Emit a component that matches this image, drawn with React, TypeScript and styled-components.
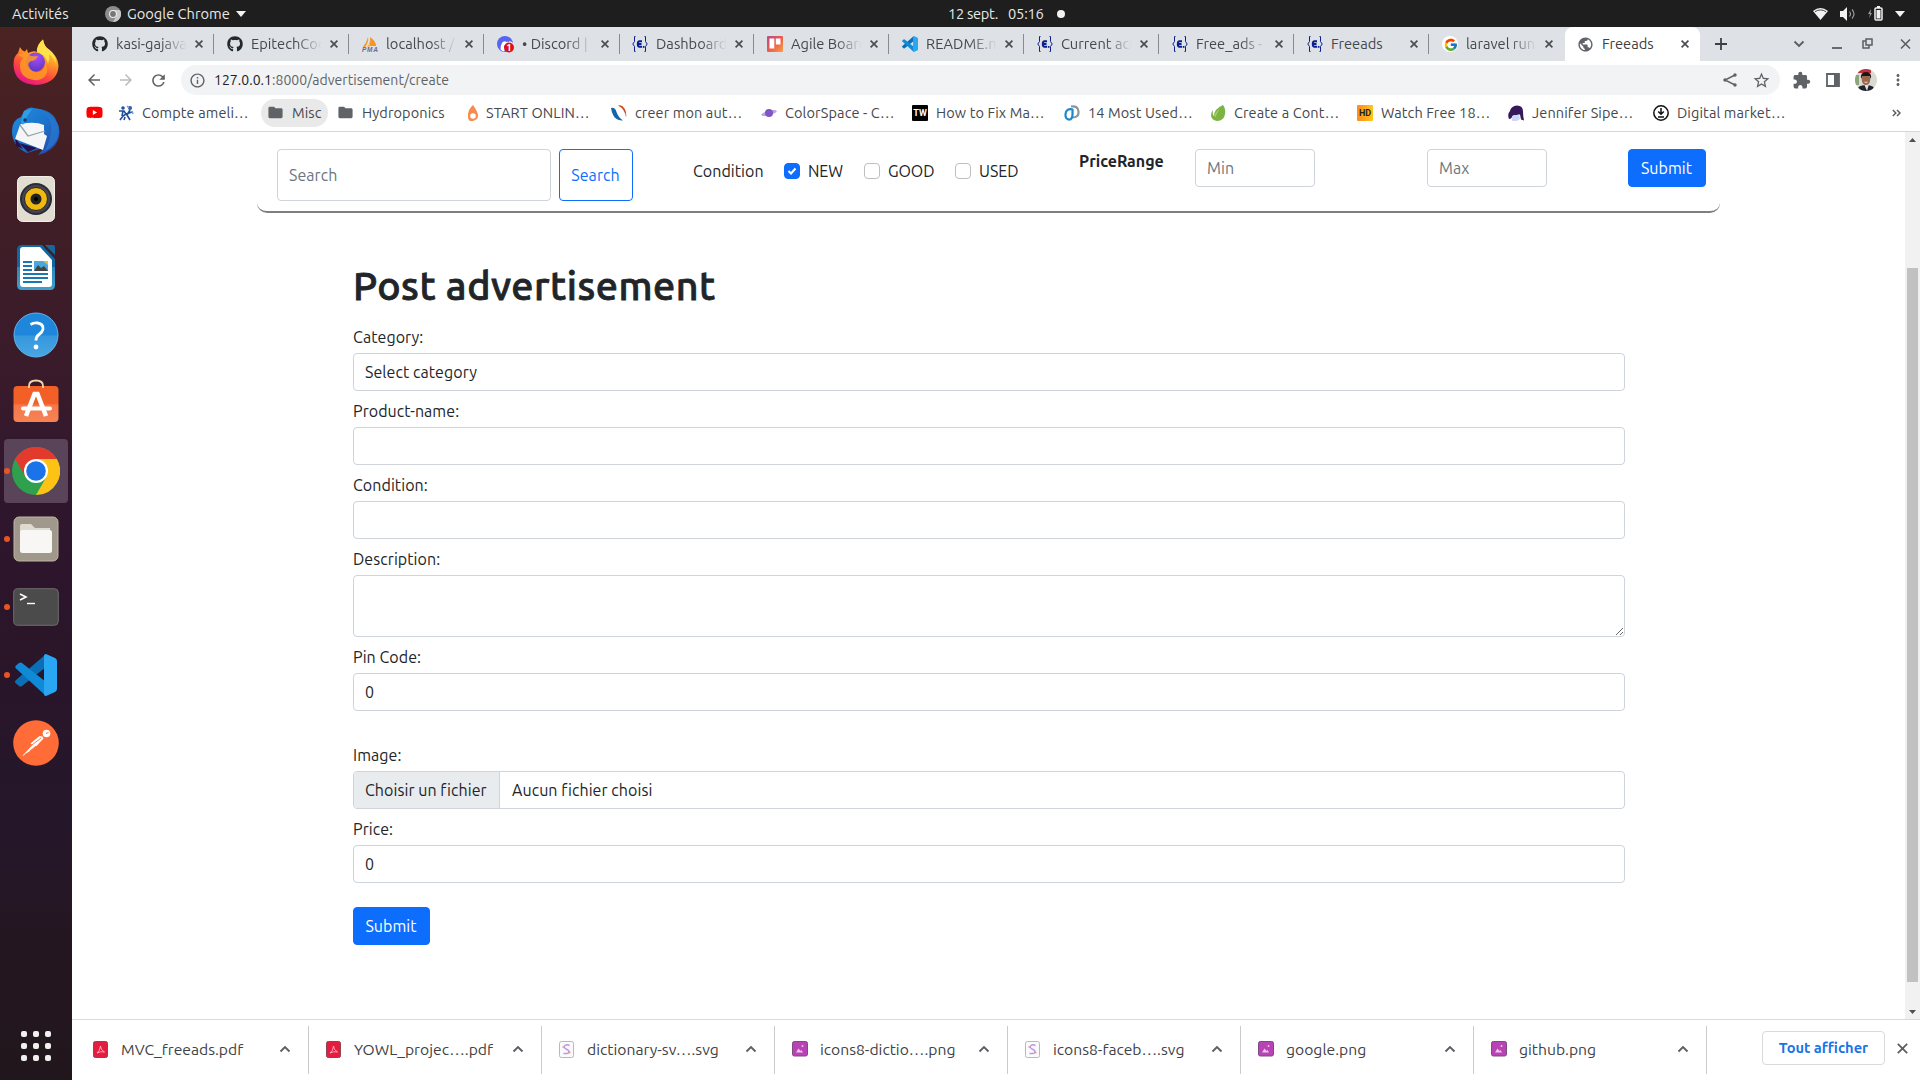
import React from "react";
import styled, { createGlobalStyle, css } from "styled-components";
import { FaGithub, FaDiscord, FaYoutube } from "react-icons/fa";
import { FcGoogle } from "react-icons/fc";
import {
  MdArrowBack,
  MdArrowForward,
  MdRefresh,
  MdInfoOutline,
  MdStarBorder,
  MdExtension,
  MdMoreVert,
  MdPublic,
  MdFolder,
} from "react-icons/md";

const UI = `"Ubuntu", "Noto Sans", "Open Sans", sans-serif`;

const GlobalStyle = createGlobalStyle`
  * { box-sizing: border-box; }
  body { margin: 0; background: #fff; font-family: ${UI}; overflow: hidden; }
  svg { display: block; flex: none; }
`;

const Desktop = styled.div`
  width: 1920px;
  height: 1080px;
  display: grid;
  grid-template: 27px 1053px / 72px 1848px;
  font-family: ${UI};
`;

/* ---------- GNOME top bar ---------- */
const TopBar = styled.header`
  grid-column: 1 / 3;
  background: #1e1e1e;
  color: #e8e8e8;
  display: grid;
  grid-template-columns: 936px 1fr auto;
  align-items: center;
  font-size: 14.67px;
  line-height: 26px;
`;
const TopGroup = styled.div<{ $gap?: number; $left?: number; $right?: number }>`
  display: flex;
  align-items: center;
  gap: ${(p) => p.$gap ?? 0}px;
  padding: 0 ${(p) => p.$right ?? 0}px 0 ${(p) => p.$left ?? 0}px;
`;

const Txt = styled.span<{ $w?: number; $ls?: number }>`
  display: block;
  flex: none;
  white-space: pre;
  ${(p) => p.$w && css`width: ${p.$w}px;`}
  letter-spacing: ${(p) => p.$ls ?? 0}px;
`;

/* ---------- Dock ---------- */
const Dock = styled.nav`
  background: linear-gradient(#4b2321 0, #431f25 12%, #3a1b2b 32%, #2f162d 45%, #2a1529 60%, #25172a 75%, #241620 88%, #22161d 100%);
  display: flex;
  flex-direction: column;
  align-items: center;
  padding-top: 2px;
`;
const DockItem = styled.div<{ $active?: boolean; $lift?: number }>`
  width: 72px;
  height: 68px;
  display: grid;
  grid-template-columns: 4px 64px 4px;
  align-items: center;
  & > div {
    grid-column: 2;
    height: 64px;
    padding-bottom: ${(p) => p.$lift ?? 0}px;
    border-radius: 4px;
    display: grid;
    place-items: center;
    background: ${(p) => (p.$active ? "#5a4459" : "transparent")};
  }
`;
const Running = styled.i`
  position: absolute;
  left: 4px;
  width: 6px;
  height: 6px;
  border-radius: 50%;
  background: #e95420;
`;
const AppGrid = styled.div`
  margin-top: auto;
  margin-bottom: 19px;
  display: grid;
  grid-template-columns: repeat(3, 6px);
  gap: 6px;
  i {
    width: 6px;
    height: 6px;
    border-radius: 2px;
    background: #f2f0ee;
  }
`;

/* ---------- Browser ---------- */
const Browser = styled.main`
  display: grid;
  grid-template-rows: 34px 38px 33px 887px 61px;
  background: #fff;
`;
const TabStrip = styled.div`
  background: #dee1e6;
  display: flex;
  padding-left: 8px;
`;
const Tab = styled.div<{ $active?: boolean; $sep?: boolean }>`
  width: 135px;
  height: 34px;
  display: flex;
  align-items: center;
  padding: 0 7px 0 12px;
  font-size: 14.67px;
  color: ${(p) => (p.$active ? "#3c4043" : "#45484d")};
  background: ${(p) => (p.$active ? "#fff" : "transparent")};
  border-radius: 8px 8px 0 0;
  svg + span { margin-left: 8px; }
  &::after {
    content: "";
    width: 1px;
    height: 20px;
    margin-left: 10px;
    background: ${(p) => (p.$sep ? "#878b91" : "transparent")};
    flex: none;
  }
`;
const TabTitle = styled.span<{ $fade?: boolean }>`
  width: 72px;
  margin-right: 7px;
  flex: none;
  overflow: hidden;
  white-space: pre;
  line-height: 24px;
  ${(p) => p.$fade && css`mask-image: linear-gradient(90deg, #000 62%, transparent 98%);`}
`;
const WindowButtons = styled.div`
  margin-left: auto;
  display: flex;
  align-items: center;
  gap: 18px;
  padding-right: 5px;
`;
const Minimise = styled.svg`
  margin: 0 -7px 0 1px;
`;
const NewTab = styled.div`
  display: flex;
  align-items: center;
  padding-left: 12px;
`;

const Toolbar = styled.div`
  display: flex;
  align-items: center;
  padding: 0 13px;
  color: #5f6368;
`;
const NavButtons = styled.div`
  width: 96px;
  display: flex;
  gap: 14px;
  .off { color: #b9bcc0; }
`;
const Omnibox = styled.div`
  width: 1599px;
  height: 30px;
  border-radius: 15px;
  background: #f1f3f4;
  display: flex;
  align-items: center;
  padding: 0 9px 0 8px;
  font-size: 14px;
  b { font-weight: 400; color: #202124; }
  svg + span { margin-left: 8px; }
`;
const OmniActions = styled.div`
  margin-left: auto;
  display: flex;
  gap: 13px;
`;
const ToolActions = styled.div`
  margin-left: 12px;
  display: flex;
  gap: 12px;
  align-items: center;
`;

const Bookmarks = styled.div`
  display: flex;
  align-items: center;
  height: 33px;
  padding: 0 19px 5px 14px;
  border-bottom: 1px solid #d5d7da;
  font-size: 14.5px;
  color: #45484c;
`;
const Bookmark = styled.div<{ $gap?: number; $pill?: boolean }>`
  display: flex;
  align-items: center;
  gap: 8px;
  flex: none;
  margin-right: ${(p) => p.$gap ?? 17}px;
  ${(p) =>
    p.$pill &&
    css`
      height: 28px;
      padding: 0 6px;
      border-radius: 14px;
      background: #e9e9ea;
    `}
`;
const Overflow = styled.svg`
  margin-left: auto;
`;
const Badge = styled.span<{ $bg: string; $fg: string }>`
  width: 16px;
  height: 16px;
  border-radius: 1px;
  display: grid;
  place-items: center;
  background: ${(p) => p.$bg};
  color: ${(p) => p.$fg};
  font: 700 9px/16px "Roboto", sans-serif;
`;

/* ---------- Web page ---------- */
const Viewport = styled.div`
  display: grid;
  grid-template-columns: 1833px 15px;
`;
const Page = styled.div`
  font-size: 16px;
  letter-spacing: 0.06px;
  color: #212529;
  display: flex;
  flex-direction: column;
`;
const FilterBar = styled.section`
  width: 1463px;
  height: 81px;
  margin-left: 185px;
  padding: 17px 14px 0 20px;
  border-bottom: 2px solid #7f7f7f;
  border-radius: 10px;
  display: flex;
  align-items: flex-start;
`;
const fieldText = css`
  font-family: ${UI};
  font-size: 16px;
  letter-spacing: 0.06px;
  color: #212529;
`;
const Input = styled.input<{ $w?: string; $h?: number; $mr?: number }>`
  ${fieldText}
  display: block;
  width: ${(p) => p.$w ?? "100%"};
  height: ${(p) => p.$h ?? 38}px;
  margin: 0 ${(p) => p.$mr ?? 0}px 0 0;
  padding: 0 11px 1px;
  border: 1px solid #ced4da;
  border-radius: 4px;
  background: #fff;
  outline: 0;
  &::placeholder { color: #6c757d; opacity: 1; }
`;
const Button = styled.button<{ $w: number; $h?: number; $outline?: boolean }>`
  ${fieldText}
  width: ${(p) => p.$w}px;
  height: ${(p) => p.$h ?? 38}px;
  padding: 0 1px 1px 0;
  border-radius: 4px;
  border: 1px solid #0d6efd;
  background: ${(p) => (p.$outline ? "#fff" : "#0d6efd")};
  color: ${(p) => (p.$outline ? "#0d6efd" : "#fff")};
`;
const Conditions = styled.div`
  display: flex;
  align-items: center;
  height: 44px;
  margin-left: 60px;
`;
const Check = styled.span<{ $on?: boolean }>`
  width: 16px;
  height: 16px;
  border-radius: 4px;
  margin-right: 8px;
  border: 1px solid ${(p) => (p.$on ? "#0d6efd" : "#bfbfbf")};
  background: ${(p) => (p.$on ? "#0d6efd" : "#fff")};
  display: grid;
  place-items: center;
`;
const PriceLabel = styled.b`
  width: 116px;
  margin-left: 59px;
  line-height: 24px;
  letter-spacing: 0;
`;

const Form = styled.form`
  width: 1272px;
  margin: 41px 0 0 281px;
`;
const Title = styled.h1`
  margin: 0 0 9px;
  font-size: 39.5px;
  font-weight: 500;
  line-height: 62px;
  letter-spacing: 0.5px;
  -webkit-text-stroke: 0.8px #212529;
`;
const Field = styled.div<{ $mb?: number }>`
  margin-bottom: ${(p) => p.$mb ?? 8}px;
`;
const Label = styled.label`
  display: block;
  height: 28px;
  line-height: 24px;
`;
const Area = styled.textarea`
  display: block;
  width: 100%;
  height: 62px;
  border: 1px solid #ced4da;
  border-radius: 4px;
  outline: 0;
`;
const FileBox = styled.div`
  ${fieldText}
  height: 38px;
  border: 1px solid #ced4da;
  border-radius: 4px;
  display: flex;
  line-height: 36px;
  overflow: hidden;
  span:first-child {
    width: 146px;
    padding-left: 11px;
    margin-right: 12px;
    background: #e9ecef;
    border-right: 1px solid #ced4da;
  }
`;
const Scrollbar = styled.div`
  background: #f1f1f1;
  display: flex;
  flex-direction: column;
  align-items: center;
  padding: 6px 0 5px;
`;
const Thumb = styled.div`
  width: 11px;
  height: 714px;
  margin: 126px 0 auto;
  background: #c1c1c1;
`;

/* ---------- Download shelf ---------- */
const Shelf = styled.footer`
  border-top: 1px solid #d9dadd;
  padding: 6px 12px 0 4px;
  display: flex;
  height: 61px;
`;
const Download = styled.div`
  width: 233px;
  height: 48px;
  border-right: 1px solid #c9cbce;
  padding: 0 17px 2px 17px;
  display: flex;
  align-items: center;
  justify-content: space-between;
  font-size: 15.7px;
  color: #3f4347;
`;
const FileIcon = styled.div`
  width: 16px;
`;
const FileName = styled.span`
  flex: 1;
  margin-left: 12px;
  white-space: pre;
`;
const ShowAll = styled.div`
  width: 123px;
  height: 34px;
  margin: 5px 12px 0 auto;
  border: 1px solid #d8dade;
  border-radius: 4px;
  color: #1a73e8;
  font: 600 14.67px/31px ${UI};
  text-align: center;
`;
const CloseShelf = styled.div`
  padding-top: 17px;
`;

/* ---------- Small icons ---------- */
const Cross = ({ s = 8, c = "#4a4d51", w = 1.7 }: { s?: number; c?: string; w?: number }) => (
  <svg width={s} height={s} viewBox="0 0 8 8" stroke={c} strokeWidth={(w * 8) / s}>
    <path d="M.6.6l6.8 6.8M7.4.6L.6 7.4" />
  </svg>
);
const Chevron = ({ up }: { up?: boolean }) => (
  <svg width="12" height="8" viewBox="0 0 12 8" fill="none" stroke="#5b5f64" strokeWidth="1.9">
    <path d={up ? "M1.5 6.5L6 2l4.5 4.5" : "M1.5 1.5L6 6l4.5-4.5"} />
  </svg>
);
const Caret = ({ w = 10, h = 6, up, c = "#f2f2f2" }: { w?: number; h?: number; up?: boolean; c?: string }) => (
  <svg width={w} height={h} viewBox="0 0 10 6" preserveAspectRatio="none">
    <path fill={c} d={up ? "M0 6h10L5 0z" : "M0 0h10L5 6z"} />
  </svg>
);
const ChromeGrey = () => (
  <svg width="16" height="16" viewBox="0 0 16 16">
    <circle cx="8" cy="8" r="8" fill="#8d8d8d" />
    <path d="M8 4h7A8 8 0 0 1 8 16l3.5-6z" fill="#c9c9c9" />
    <circle cx="8" cy="8" r="4" fill="#eee" />
    <circle cx="8" cy="8" r="2.9" fill="#777" />
  </svg>
);
const Epi = () => (
  <svg width="16" height="16" viewBox="0 0 16 16" fill="none" stroke="#0b1f8f">
    <path d="M3.5.5h-1v5L.8 8l1.700 2.500v5h1M12.500.5h1v5L15.200 8l-1.700 2.500v5h-1" />
    <path strokeWidth="2" d="M10 5.200H7.500Q5.800 5.200 5.800 8t1.700 2.800H10M5.500 8h4" />
    <path strokeWidth="1.800" d="M10.800 10.900h1.700" />
  </svg>
);
const Pma = () => (
  <svg width="16" height="16" viewBox="0 0 16 16">
    <path d="M6 1Q7 6 3 11H1Q5 6 6 1M8 1q6 4 6 9H7Q9 5 8 1" fill="#f79621" />
    <path d="M5 11q3-4 3-8v8z" fill="#fbb860" />
    <text x="0" y="16" fontSize="6.5" fontWeight="700" fontStyle="italic" fontFamily="Liberation Sans" fill="#666c99" textLength="16">PMA</text>
  </svg>
);
const DiscordBadge = () => (
  <svg width="17" height="17" viewBox="0 0 17 17">
    <circle cx="8" cy="8" r="8" fill="#5865f2" />
    <FaDiscord x={3} y={3} width={10} height={10} color="#fff" />
    <circle cx="12" cy="11.5" r="5" fill="#d8121c" />
    <text x="9.600" y="14.800" fontSize="9" fontWeight="700" fontFamily="Roboto" fill="#fff">1</text>
  </svg>
);
const Trello = () => (
  <svg width="16" height="16" viewBox="0 0 16 16">
    <defs>
      <linearGradient id="tr" x1="0" y1="0" x2="1" y2="1">
        <stop offset="0" stopColor="#b0508f" /><stop offset=".5" stopColor="#ee5a48" /><stop offset="1" stopColor="#f7a04a" />
      </linearGradient>
    </defs>
    <rect width="16" height="16" rx="1" fill="url(#tr)" />
    <path d="M2.500 2.500h4.800v10H2.500zM8.800 2.500h4.700v6H8.800z" fill="#fff" />
  </svg>
);
const VsLogo = ({ s = 16 }: { s?: number }) => (
  <svg width={s} height={s} viewBox="0 0 42 42">
    <path d="M31 0L1 26q-2 2 0 3.500l3 2.500q1.500 1 3 0L31 13z" fill="#0a6fb5" />
    <path d="M31 42L1 14.500q-1.500-1.500 0-3L4 9q1.500-1 3 0l24 19z" fill="#1089d6" />
    <path d="M31 0l9 4q2 1 2 3v28q0 2-2 3l-9 4q-2 0-2-2V2q0-2 2-2z" fill="#2aa7f2" />
  </svg>
);
const GoogleDisc = () => (
  <svg width="16" height="16" viewBox="0 0 16 16">
    <circle cx="8" cy="8" r="8" fill="#fff" />
    <FcGoogle x={1.5} y={1.5} width={13} height={13} />
  </svg>
);
const Share = () => (
  <svg width="18" height="18" viewBox="0 0 18 18" fill="#5f6368">
    <path d="M14 4L4 9l10 5" fill="none" stroke="#5f6368" strokeWidth="1.400" />
    <circle cx="14" cy="4" r="1.700" /><circle cx="4" cy="9" r="1.700" /><circle cx="14" cy="14" r="1.700" />
  </svg>
);
const Avatar = () => (
  <svg width="22" height="22" viewBox="0 0 22 22">
    <defs><clipPath id="av"><circle cx="11" cy="11" r="11" /></clipPath></defs>
    <g clipPath="url(#av)">
      <rect width="22" height="22" fill="#d9dad2" />
      <path d="M3 0h13v4H3z" fill="#b93340" /><path d="M0 6h4v10H0z" fill="#8aa57c" />
      <path d="M2 22q0-6 9-6t9 6z" fill="#20242e" />
      <path d="M9 15h5l-2 7z" fill="#dfe3ea" />
      <ellipse cx="11" cy="10.500" rx="4.200" ry="5.500" fill="#9c674a" />
      <path d="M6 10q-1-7 5-7t5 7l-1.500-3h-7z" fill="#1d1615" />
      <path d="M9.500 13q1.500 1 3 0" stroke="#e9d8d0" fill="none" />
    </g>
  </svg>
);
const Ameli = () => (
  <svg width="16" height="16" viewBox="0 0 16 16" fill="none" stroke="#1f4f9c" strokeWidth="1.600">
    <circle cx="5" cy="3" r="1" /><circle cx="12" cy="3" r="1.200" />
    <path d="M1 6h5l2 3-3 2-3 4M5 6l-1 5M8 9l6-2M12 5l-3 5 3 5M7 12l-1 3" /><path d="M14 6l1 3M9 1l2 2" stroke="#6aa8dd" />
  </svg>
);
const Drop = () => (
  <svg width="10" height="16" viewBox="0 0 10 16">
    <path d="M5 0q5 7 5 10.800T5 16 0 10.800 5 0z" fill="#f58b4c" /><circle cx="5" cy="11" r="2.800" fill="#fff" />
  </svg>
);
const Swoosh = () => (
  <svg width="16" height="16" viewBox="0 0 16 16">
    <path d="M0 3q4-1 5.500 4t6.500 8.500Q2 16 0 3z" fill="#1565a9" /><path d="M7 .5q4-1 6.500 3t1.500 9Q14 4 7 .5z" fill="#d2451e" />
  </svg>
);
const Planet = () => (
  <svg width="16" height="16" viewBox="0 0 16 16">
    <ellipse cx="8" cy="8" rx="8" ry="2.300" fill="#b8a4e8" transform="rotate(-15 8 8)" /><circle cx="8" cy="8" r="4" fill="#7e57c2" />
  </svg>
);
const Swirl = () => (
  <svg width="16" height="16" viewBox="0 0 16 16" fill="none" strokeWidth="2.200">
    <path d="M7 1.500q7-1 7.500 5T8.500 12.500" stroke="#8a949c" />
    <path d="M9 4.500Q2 3 1.500 9t5 5.500M8.500 4v6q0 3-2 4.500" stroke="#1b86cc" />
  </svg>
);
const Leaf = () => (
  <svg width="15" height="16" viewBox="0 0 15 16">
    <path d="M12 0q3 4 2 9-1 7-8 7-6-1-6-6 0-3 2-5-1 4 1 6 0-7 9-11z" fill="#7cb342" /><path d="M3 11Q5 6 9 4 5 9 5 12z" fill="#a5d06e" />
  </svg>
);
const Jennifer = () => (
  <svg width="16" height="16" viewBox="0 0 16 16">
    <path d="M1 14Q-1 9 2 6 3 1 9 .5q6 0 6 6 0 4 1 9l-3-1-1-5-7 1-2 3z" fill="#35195a" /><path d="M4 11l7-1.500 1 4.500-3 2H4z" fill="#cdd8f6" />
  </svg>
);
const Digital = () => (
  <svg width="16" height="16" viewBox="0 0 16 16" fill="none" stroke="#111" strokeWidth="1.500">
    <circle cx="8" cy="8" r="7.200" /><path d="M8 3v6M5.200 6.500L8 9.300l2.800-2.800M5 12h6" />
  </svg>
);

/* ---------- Dock icons ---------- */
const Firefox = () => (
  <svg width="48" height="48" viewBox="0 0 48 48">
    <defs>
      <linearGradient id="ff" x1=".8" y1="0" x2=".3" y2="1">
        <stop offset="0" stopColor="#fff44f" /><stop offset=".35" stopColor="#ffa726" /><stop offset=".68" stopColor="#ff4b3a" /><stop offset="1" stopColor="#e5118a" />
      </linearGradient>
      <radialGradient id="fp" cx=".55" cy=".25" r=".8"><stop offset="0" stopColor="#a64bff" /><stop offset="1" stopColor="#5a38b8" /></radialGradient>
    </defs>
    <path fill="url(#ff)" d="M8 9q2 4 5 4.500l2-2.500 1 4q6-3 9-1-1-7 6-12.500 1 7 6 10 9 7 9.500 16Q46 45 25 47 2 46 1.500 27q0-9 4.500-12z" />
    <circle cx="23.500" cy="24" r="9.500" fill="url(#fp)" />
    <path fill="#ff9a23" d="M6 17q7-4 11 0 3 2 9 1-2 5-7 5-4 2-2 6 3 6 9 5 7-1 7-9 4 6 1 12-4 6-12 5Q8 40 8 28 8 21 12 20z" opacity=".85" />
    <path fill="#ffe14a" d="M25 14Q25 7 31 1.500q1 7 6 10 7 5 7 14-3-7-7-9 1 4-1 9-2-9-11-11.500z" />
  </svg>
);
const Thunderbird = () => (
  <svg width="48" height="48" viewBox="0 0 48 48">
    <defs><linearGradient id="tb" x1="0" y1="0" x2="1" y2="1"><stop offset="0" stopColor="#1f8fe0" /><stop offset=".55" stopColor="#1c6fc9" /><stop offset="1" stopColor="#2c3a9c" /></linearGradient></defs>
    <path fill="url(#tb)" d="M12 4Q17-1 22 1q18 2 22 12 6 10 2 20-4 11-20 15l6-7-8 2-9 3Q0 39 0 24 0 13 9 10z" />
    <path fill="#24104a" d="M3 30l8 12-7-3zM7 36l18 5-9 4z" />
    <path fill="#f4f5f7" d="M9 17q14-3 23 1v9l3 2-4 14L3 32l5-14z" />
    <path d="M8 18l8 11 17-5" fill="none" stroke="#9aa0a8" strokeWidth="1.300" />
    <path fill="#2f9fe8" d="M12 4l8-2q-6 8-9 16l-2-3z" />
    <circle cx="13" cy="13" r="1.800" fill="#193a6b" />
    <path fill="#2877cf" d="M27 4q14 6 12 20-1 10-6 20 11-6 13-14 3-12-5-19-6-6-14-7z" opacity=".8" />
  </svg>
);
const Rhythmbox = () => (
  <svg width="38" height="46" viewBox="0 0 38 46">
    <rect x=".5" y=".5" width="37" height="45" rx="5" fill="#e2ddd1" stroke="#f2efe8" />
    <circle cx="19" cy="23" r="16" fill="#2b2b36" /><circle cx="19" cy="23" r="14" fill="#454550" />
    <circle cx="19" cy="23" r="11.500" fill="#f0b90f" stroke="#222" />
    <circle cx="19" cy="23" r="5.500" fill="#222" /><circle cx="19" cy="23" r="2" fill="#000" />
  </svg>
);
const Writer = () => (
  <svg width="38" height="46" viewBox="0 0 38 46">
    <defs><linearGradient id="wr" x1="0" y1="0" x2="0" y2="1"><stop offset=".48" stopColor="#0f689f" /><stop offset=".5" stopColor="#2d87b7" /><stop offset="1" stopColor="#3fa0cf" /></linearGradient></defs>
    <path d="M5 1h20l13 14v26q0 5-5 5H5q-5 0-5-5V6q0-5 5-5z" fill="url(#wr)" />
    <path d="M28 1h8q2 0 2 2v8z" fill="#15689b" />
    <path d="M6 3h17l12 13v24q0 3-3 3H6q-3 0-3-3V6q0-3 3-3z" fill="#fff" />
    <path d="M6 18h9M6 22h9M6 26h9M6 30h25M6 34h25M6 38h19" stroke="#1a78b0" strokeWidth="2" />
    <path d="M17 17h14v10H17z" fill="#4ba8dc" /><path d="M17 27l4-6 3 3 3-2 4 5z" fill="#444" /><path d="M26 17h5v4z" fill="#f5b92e" />
  </svg>
);
const Help = () => (
  <svg width="46" height="46" viewBox="0 0 46 46">
    <defs><linearGradient id="hp" x1="0" y1="0" x2="0" y2="1"><stop offset=".5" stopColor="#1e87dc" /><stop offset=".52" stopColor="#3697dd" /><stop offset="1" stopColor="#49a6e3" /></linearGradient></defs>
    <circle cx="23" cy="23" r="22" fill="url(#hp)" stroke="#62b3ec" />
    <path d="M17.500 12.500q3-1.800 7-1.500 6 1 5.500 6-.5 3-4 5.500-3 2-3 6" fill="none" stroke="#fff" strokeWidth="2.800" /><circle cx="23" cy="35" r="2.400" fill="#fff" />
  </svg>
);
const Software = () => (
  <svg width="46" height="46" viewBox="0 0 46 46">
    <defs><linearGradient id="sw" x1="0" y1="0" x2="0" y2="1"><stop offset=".5" stopColor="#f25f27" /><stop offset=".52" stopColor="#f4774a" /><stop offset="1" stopColor="#f68353" /></linearGradient></defs>
    <rect x=".5" y="9" width="45" height="36" rx="4" fill="url(#sw)" />
    <path d="M16 11V9q0-5.500 7-5.500T30 9v2" fill="none" stroke="#f3d6a7" strokeWidth="1.800" />
    <path d="M13 39l8.500-22h3L33 39" fill="none" stroke="#fff" strokeWidth="4.500" /><path d="M10 31.500h27" stroke="#fff" strokeWidth="4" strokeLinecap="round" />
  </svg>
);
const Chrome = () => (
  <svg width="48" height="48" viewBox="0 0 48 48">
    <circle cx="24" cy="24" r="24" fill="#2fa14e" />
    <path d="M24 12h20.800A24 24 0 0 1 24 48l10.400-18z" fill="#fcc314" />
    <path d="M24 12h20.800A24 24 0 0 0 3.200 12l10.400 18Z" fill="#e23b2e" />
    <circle cx="24" cy="24" r="12" fill="#fff" /><circle cx="24" cy="24" r="9.800" fill="#1a73e8" />
  </svg>
);
const Files = () => (
  <svg width="46" height="46" viewBox="0 0 46 46">
    <rect x="1" y="1" width="44" height="44" rx="5" fill="#a0988a" stroke="#bdb5a4" />
    <path d="M7 14V10q0-2 2-2h9l4 4h15v8H7z" fill="#dfdad0" /><rect x="7" y="14" width="32" height="23" rx="2.500" fill="#f8f7f5" />
  </svg>
);
const Terminal = () => (
  <svg width="46" height="38" viewBox="0 0 46 38">
    <rect x=".7" y=".7" width="44.600" height="36.600" rx="4" fill="#4b4b4b" stroke="#6d6d6d" />
    <path d="M7 6l6 3-6 3" fill="none" stroke="#fff" strokeWidth="1.600" /><path d="M14 15.500h8" stroke="#fff" strokeWidth="1.400" />
  </svg>
);
const Postman = () => (
  <svg width="46" height="46" viewBox="0 0 46 46">
    <circle cx="23" cy="23" r="22.800" fill="#ff6c37" />
    <circle cx="33.500" cy="13.500" r="3.800" fill="#fff" />
    <path d="M9.500 35.500l3-3 7-7.500-2-1.500 9-7.500 3 .5 1 2-7 7.500-8 6-3.500 2-1 1.500z" fill="#fff" />
    <path d="M19 25l9-7M17 31l6-5" stroke="#ff6c37" strokeWidth=".9" fill="none" /><path d="M33 13.500l2.500-1" stroke="#ff6c37" />
  </svg>
);

const PdfIcon = () => (
  <svg width="15" height="17" viewBox="0 0 15 17">
    <rect x=".5" y=".5" width="14" height="16" rx="1.800" fill="#e51c3f" stroke="#8d4550" />
    <path d="M4 12q3-2 3.500-7 0 4 4 6-4-1-7.500 1z" fill="none" stroke="#ffc6d0" strokeWidth=".8" />
  </svg>
);
const SvgIcon = () => (
  <svg width="15" height="17" viewBox="0 0 15 17">
    <rect x=".5" y=".5" width="14" height="16" rx="1.800" fill="#faf9fc" stroke="#b9b9bd" />
    <path d="M10.500 4.500Q8 3 6 4.500T7 8q3 1 3 3t-5.500 1.500" fill="none" stroke="#b49aec" strokeWidth="1.500" /><path d="M3.500 6h2M9.500 11.500h2" stroke="#ff8f70" strokeWidth="1.500" />
  </svg>
);
const PngIcon = () => (
  <svg width="16" height="16" viewBox="0 0 16 16">
    <rect x=".5" y=".5" width="15" height="14.500" rx="1.800" fill="#b743b5" stroke="#7c4b80" />
    <path d="M4 11.500l2.500-4 2 2.500 1-1 1.500 2.500z" fill="#f0c4ee" /><circle cx="10.500" cy="5" r="1" fill="#f0c4ee" />
  </svg>
);

const dock: { icon: React.ReactNode; running?: boolean; active?: boolean; lift?: number }[] = [
  { icon: <Firefox />, lift: 3 },
  { icon: <Thunderbird /> },
  { icon: <Rhythmbox /> },
  { icon: <Writer />, lift: 1 },
  { icon: <Help /> },
  { icon: <Software />, lift: 7 },
  { icon: <Chrome />, running: true, active: true },
  { icon: <Files />, running: true },
  { icon: <Terminal />, running: true },
  { icon: <VsLogo s={42} />, running: true },
  { icon: <Postman />, lift: 1 },
];

const tabs: { icon: React.ReactNode; title: string; plain?: boolean }[] = [
  { icon: <FaGithub size={16} color="#24292f" />, title: "kasi-gajavan" },
  { icon: <FaGithub size={16} color="#24292f" />, title: "EpitechCod" },
  { icon: <Pma />, title: "localhost / l" },
  { icon: <DiscordBadge />, title: "• Discord | #" },
  { icon: <Epi />, title: "Dashboard" },
  { icon: <Trello />, title: "Agile Board" },
  { icon: <VsLogo />, title: "README.m" },
  { icon: <Epi />, title: "Current act" },
  { icon: <Epi />, title: "Free_ads - " },
  { icon: <Epi />, title: "Freeads", plain: true },
  { icon: <GoogleDisc />, title: "laravel run" },
  { icon: <MdPublic size={17} color="#5f6368" />, title: "Freeads", plain: true },
];

const marks: { icon: React.ReactNode; text: string; w: number; gap?: number; pill?: boolean }[] = [
  { icon: <Ameli />, text: "Compte ameli…", w: 108, gap: 11 },
  { icon: <MdFolder size={17} color="#5f6368" />, text: "Misc", w: 30, gap: 9, pill: true },
  { icon: <MdFolder size={17} color="#5f6368" />, text: "Hydroponics", w: 87, gap: 19 },
  { icon: <Drop />, text: "START ONLIN…", w: 108, gap: 17 },
  { icon: <Swoosh />, text: "creer mon aut…", w: 109 },
  { icon: <Planet />, text: "ColorSpace - C…", w: 110 },
  { icon: <Badge $bg="#000" $fg="#fff">TW</Badge>, text: "How to Fix Ma…", w: 111 },
  { icon: <Swirl />, text: "14 Most Used…", w: 106 },
  { icon: <Leaf />, text: "Create a Cont…", w: 107, gap: 16 },
  { icon: <Badge $bg="linear-gradient(90deg,#ff8a1c,#ffc61c)" $fg="#222">HD</Badge>, text: "Watch Free 18…", w: 110 },
  { icon: <Jennifer />, text: "Jennifer Sipe…", w: 104 },
  { icon: <Digital />, text: "Digital market…", w: 111, gap: 0 },
];

const downloads = [
  { icon: <PdfIcon />, name: "MVC_freeads.pdf" },
  { icon: <PdfIcon />, name: "YOWL_projec….pdf" },
  { icon: <SvgIcon />, name: "dictionary-sv….svg" },
  { icon: <PngIcon />, name: "icons8-dictio….png" },
  { icon: <SvgIcon />, name: "icons8-faceb….svg" },
  { icon: <PngIcon />, name: "google.png" },
  { icon: <PngIcon />, name: "github.png" },
];

export default function App() {
  return (
    <>
      <GlobalStyle />
      <Desktop>
        <TopBar>
          <TopGroup $left={12}>
            <Txt $w={93}>Activités</Txt>
            <ChromeGrey />
            <TopGroup $left={6} $gap={5}>
              <Txt $w={104}>Google Chrome</Txt>
              <Caret />
            </TopGroup>
          </TopGroup>
          <TopGroup $left={12}>
            <Txt $w={60} $ls={-0.3}>12 sept.</Txt>
            <Txt $w={49} $ls={-0.2}>05:16</Txt>
            <svg width="8" height="8"><circle cx="4" cy="4" r="4" fill="#f2f2f2" /></svg>
          </TopGroup>
          <TopGroup $gap={12} $right={15}>
            <svg width="15" height="13" viewBox="0 0 15 13"><path d="M0 4q7.500-6 15 0L7.500 13z" fill="#f2f2f2" /><path d="M2 4.700q5.500-3.500 11 0" fill="none" stroke="#1e1e1e" strokeWidth=".8" /></svg>
            <svg width="16" height="14" viewBox="0 0 16 14"><path d="M0 4h3l4-4v14l-4-4H0z" fill="#f2f2f2" /><path d="M9.500 4.500q2 2.500 0 5M12 2.500q4 4.500 0 9" fill="none" stroke="#999" strokeWidth="1.200" /></svg>
            <svg width="15" height="15" viewBox="0 0 15 15"><path d="M3 3L0 8h2l-1 4 3-5H2.500z" fill="#999" /><rect x="7" y="2" width="7" height="12" rx="1" fill="none" stroke="#f2f2f2" strokeWidth="1.500" /><path d="M9 0h3v2H9zM8.500 4h4v8.500h-4z" fill="#f2f2f2" /></svg>
            <Caret />
          </TopGroup>
        </TopBar>

        <Dock>
          {dock.map((d, i) => (
            <DockItem key={i} $active={d.active} $lift={d.lift}>
              {d.running && <Running />}
              <div>{d.icon}</div>
            </DockItem>
          ))}
          <AppGrid>
            {Array.from({ length: 9 }, (_, i) => <i key={i} />)}
          </AppGrid>
        </Dock>

        <Browser>
          <TabStrip>
            {tabs.map((t, i) => (
              <Tab key={i} $active={i === 11} $sep={i < 10}>
                {t.icon}
                <TabTitle $fade={!t.plain}>{t.title}</TabTitle>
                <Cross />
              </Tab>
            ))}
            <NewTab>
              <svg width="18" height="12" viewBox="0 0 18 12" stroke="#3c4043" strokeWidth="1.800"><path d="M9 0v12M3 6h12" /></svg>
            </NewTab>
            <WindowButtons>
              <Chevron />
              <Minimise width="24" height="12" viewBox="0 0 24 12"><path d="M8 10h10" stroke="#5b5f64" strokeWidth="1.800" /></Minimise>
              <svg width="18" height="12" viewBox="0 0 18 12" fill="none" stroke="#5b5f64" strokeWidth="1.500"><path d="M7 1h6v6H7zM7 3H4v7h6V7" /></svg>
              <svg width="20" height="12" viewBox="0 0 20 12" stroke="#5b5f64" strokeWidth="1.600"><path d="M6 1.500l9 9M15 1.500l-9 9" /></svg>
            </WindowButtons>
          </TabStrip>

          <Toolbar>
            <NavButtons>
              <MdArrowBack size={18} />
              <MdArrowForward size={18} className="off" />
              <MdRefresh size={19} />
            </NavButtons>
            <Omnibox>
              <MdInfoOutline size={17} />
              <Txt $ls={0.03}><b>127.0.0.1</b>:8000/advertisement/create</Txt>
              <OmniActions>
                <Share />
                <MdStarBorder size={19} />
              </OmniActions>
            </Omnibox>
            <ToolActions>
              <MdExtension size={19} />
              <svg width="20" height="14" viewBox="0 0 20 14"><path d="M4 1h12v12H4z" fill="none" stroke="#5f6368" strokeWidth="1.800" /><path d="M11 1h5v12h-5z" fill="#5f6368" /></svg>
              <Avatar />
              <MdMoreVert size={18} />
            </ToolActions>
          </Toolbar>

          <Bookmarks>
            <Bookmark $gap={15}><FaYoutube size={17} color="#f00" /></Bookmark>
            {marks.map((m) => (
              <Bookmark key={m.text} $gap={m.gap} $pill={m.pill}>
                {m.icon}
                <Txt $w={m.w} $ls={0.12}>{m.text}</Txt>
              </Bookmark>
            ))}
            <Overflow width="9" height="8" viewBox="0 0 9 8" fill="none" stroke="#5b5f64" strokeWidth="1.500">
              <path d="M.8 1l3 3-3 3M5 1l3 3-3 3" />
            </Overflow>
          </Bookmarks>

          <Viewport>
            <Page>
              <FilterBar>
                <Input placeholder="Search" $w="274px" $h={52} $mr={8} />
                <Button $w={74} $h={52} $outline>Search</Button>
                <Conditions>
                  <Txt $w={91} $ls={0.05}>Condition</Txt>
                  <Check $on>
                    <svg width="12" height="12" viewBox="0 0 12 12" fill="none" stroke="#fff" strokeWidth="2"><path d="M2.500 6l2.500 2.500L9.500 3.500" /></svg>
                  </Check>
                  <Txt $w={56} $ls={-0.1}>NEW</Txt>
                  <Check />
                  <Txt $w={67} $ls={-0.1}>GOOD</Txt>
                  <Check />
                  <Txt $w={41}>USED</Txt>
                </Conditions>
                <PriceLabel>PriceRange</PriceLabel>
                <Input placeholder="Min" $w="120px" $mr={112} />
                <Input placeholder="Max" $w="120px" $mr={81} />
                <Button $w={78}>Submit</Button>
              </FilterBar>

              <Form>
                <Title>Post advertisement</Title>
                <Field><Label>Category:</Label><Input defaultValue="Select category" /></Field>
                <Field><Label>Product-name:</Label><Input /></Field>
                <Field><Label>Condition:</Label><Input /></Field>
                <Field><Label>Description:</Label><Area /></Field>
                <Field $mb={32}><Label>Pin Code:</Label><Input defaultValue="0" /></Field>
                <Field>
                  <Label>Image:</Label>
                  <FileBox><span>Choisir un fichier</span><span>Aucun fichier choisi</span></FileBox>
                </Field>
                <Field $mb={24}><Label>Price:</Label><Input defaultValue="0" /></Field>
                <Button $w={77} type="button">Submit</Button>
              </Form>
            </Page>
            <Scrollbar>
              <Caret w={7} h={4} up c="#505050" />
              <Thumb />
              <Caret w={7} h={4} c="#505050" />
            </Scrollbar>
          </Viewport>

          <Shelf>
            {downloads.map((d) => (
              <Download key={d.name}>
                <FileIcon>{d.icon}</FileIcon>
                <FileName>{d.name}</FileName>
                <Chevron up />
              </Download>
            ))}
            <ShowAll>Tout afficher</ShowAll>
            <CloseShelf><Cross s={11} c="#5b5f64" w={1.8} /></CloseShelf>
          </Shelf>
        </Browser>
      </Desktop>
    </>
  );
}
